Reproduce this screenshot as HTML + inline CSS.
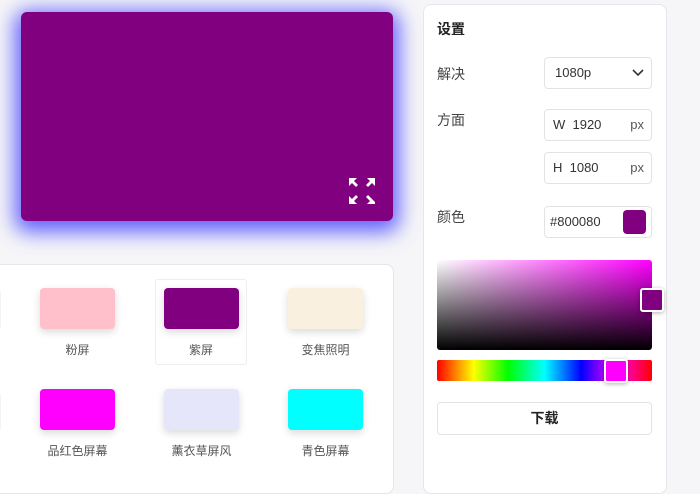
<!DOCTYPE html>
<html><head><meta charset="utf-8"><style>
*{box-sizing:border-box;margin:0;padding:0}
body{width:700px;height:477px;overflow:hidden;background:#f6f6f8;font-family:"Liberation Sans","Noto Sans CJK SC",sans-serif;position:relative;color:#333}
.prev{position:absolute;left:21px;top:12px;width:372px;height:209px;background:#800080;border-radius:6px;box-shadow:0 5px 20px 6px rgba(70,70,255,.85)}
.icon{position:absolute;left:347px;top:176px}
.bp{position:absolute;left:-10px;top:264px;width:404px;height:230px;background:#fff;border:1px solid #e6e6ea;border-radius:8px}
.card{position:absolute;width:111px;height:86px;text-align:center;font-size:12px;color:#555}
.card .sw{position:absolute;left:18px;top:9px;width:75px;height:41px;border-radius:4px;box-shadow:0 3px 8px rgba(0,0,0,.15)}
.card span{position:absolute;left:0;right:0;top:62px;font-size:12px}
.sel{border:1px solid #eee;border-radius:3px;width:92px}
.rp{position:absolute;left:423px;top:4px;width:244px;height:490px;background:#fff;border:1px solid #e6e6ea;border-radius:8px}
.lbl{position:absolute;left:437px;font-size:14px;color:#444}
.in{position:absolute;left:544px;width:108px;height:32px;border:1px solid #e3e3e6;border-radius:4px;background:#fff;font-size:13px;color:#333;line-height:30px;padding-left:8px}
.in .px{position:absolute;right:7px;top:0;color:#555}
</style></head><body>
<div class="prev"></div>
<svg class="icon" width="30" height="30" viewBox="0 0 30 30" fill="#fff">
<path d="M2 2h8l-3 3 4 4-2 2-4-4-3 3z"/><path d="M28 2h-8l3 3-4 4 2 2 4-4 3 3z"/>
<path d="M2 28h8l-3-3 4-4-2-2-4 4-3-3z"/><path d="M28 28h-8l3-3-4-4 2-2 4 4 3 3z"/>
</svg>
<div class="bp"></div>
<div style="position:absolute;left:-10px;top:290px;width:11px;height:40px;border:1px solid #f3f3f3;border-radius:4px"></div>
<div style="position:absolute;left:-10px;top:392px;width:11px;height:40px;border:1px solid #f3f3f3;border-radius:4px"></div>
<div class="card" style="left:22px;top:279px"><div class="sw" style="background:#ffc0cb"></div><span>粉屏</span></div>
<div class="card sel" style="left:155px;top:279px"><div class="sw" style="background:#800080;left:8px;top:8px"></div><span style="top:61px">紫屏</span></div>
<div class="card" style="left:270px;top:279px"><div class="sw" style="background:#faf0e0"></div><span>变焦照明</span></div>
<div class="card" style="left:22px;top:380px"><div class="sw" style="background:#ff00ff"></div><span>品红色屏幕</span></div>
<div class="card" style="left:146px;top:380px"><div class="sw" style="background:#e6e6fa"></div><span>薰衣草屏风</span></div>
<div class="card" style="left:270px;top:380px"><div class="sw" style="background:#00ffff"></div><span>青色屏幕</span></div>
<div class="rp"></div>
<div class="lbl" style="top:19px;font-weight:bold;color:#222;font-size:14px">设置</div>
<div class="lbl" style="top:64px">解决</div>
<div class="lbl" style="top:110px">方面</div>
<div class="lbl" style="top:207px">颜色</div>
<div class="in" style="top:57px;padding-left:10px">1080p<svg style="position:absolute;right:7px;top:11px" width="12" height="8" viewBox="0 0 12 8"><path d="M1 1l5 5 5-5" stroke="#333" stroke-width="1.6" fill="none"/></svg></div>
<div class="in" style="top:109px">W&nbsp; 1920<span class="px">px</span></div>
<div class="in" style="top:152px">H&nbsp; 1080<span class="px">px</span></div>
<div class="in" style="top:206px;padding-left:5px">#800080<div style="position:absolute;right:5px;top:3px;width:23px;height:24px;border-radius:4px;background:#800080"></div></div>
<div style="position:absolute;left:437px;top:260px;width:215px;height:90px;border-radius:3px;background:linear-gradient(to top,#000,rgba(0,0,0,0)),linear-gradient(to right,#fff,#f0f);"></div>
<div style="position:absolute;left:640px;top:288px;width:24px;height:24px;border:2px solid #fff;border-radius:3px;background:#800080;box-shadow:0 1px 4px rgba(0,0,0,.3)"></div>
<div style="position:absolute;left:437px;top:360px;width:215px;height:21px;border-radius:2px;background:linear-gradient(to right,#f00,#ff0 17%,#0f0 33%,#0ff 50%,#00f 67%,#f0f 83%,#f00)"></div>
<div style="position:absolute;left:604px;top:359px;width:24px;height:24px;border:2px solid #fff;border-radius:3px;background:#f0f;box-shadow:0 1px 4px rgba(0,0,0,.3)"></div>
<div style="position:absolute;left:437px;top:402px;width:215px;height:33px;border:1px solid #e3e3e6;border-radius:4px;text-align:center;line-height:31px;font-weight:bold;font-size:14px;color:#222">下载</div>
</body></html>
